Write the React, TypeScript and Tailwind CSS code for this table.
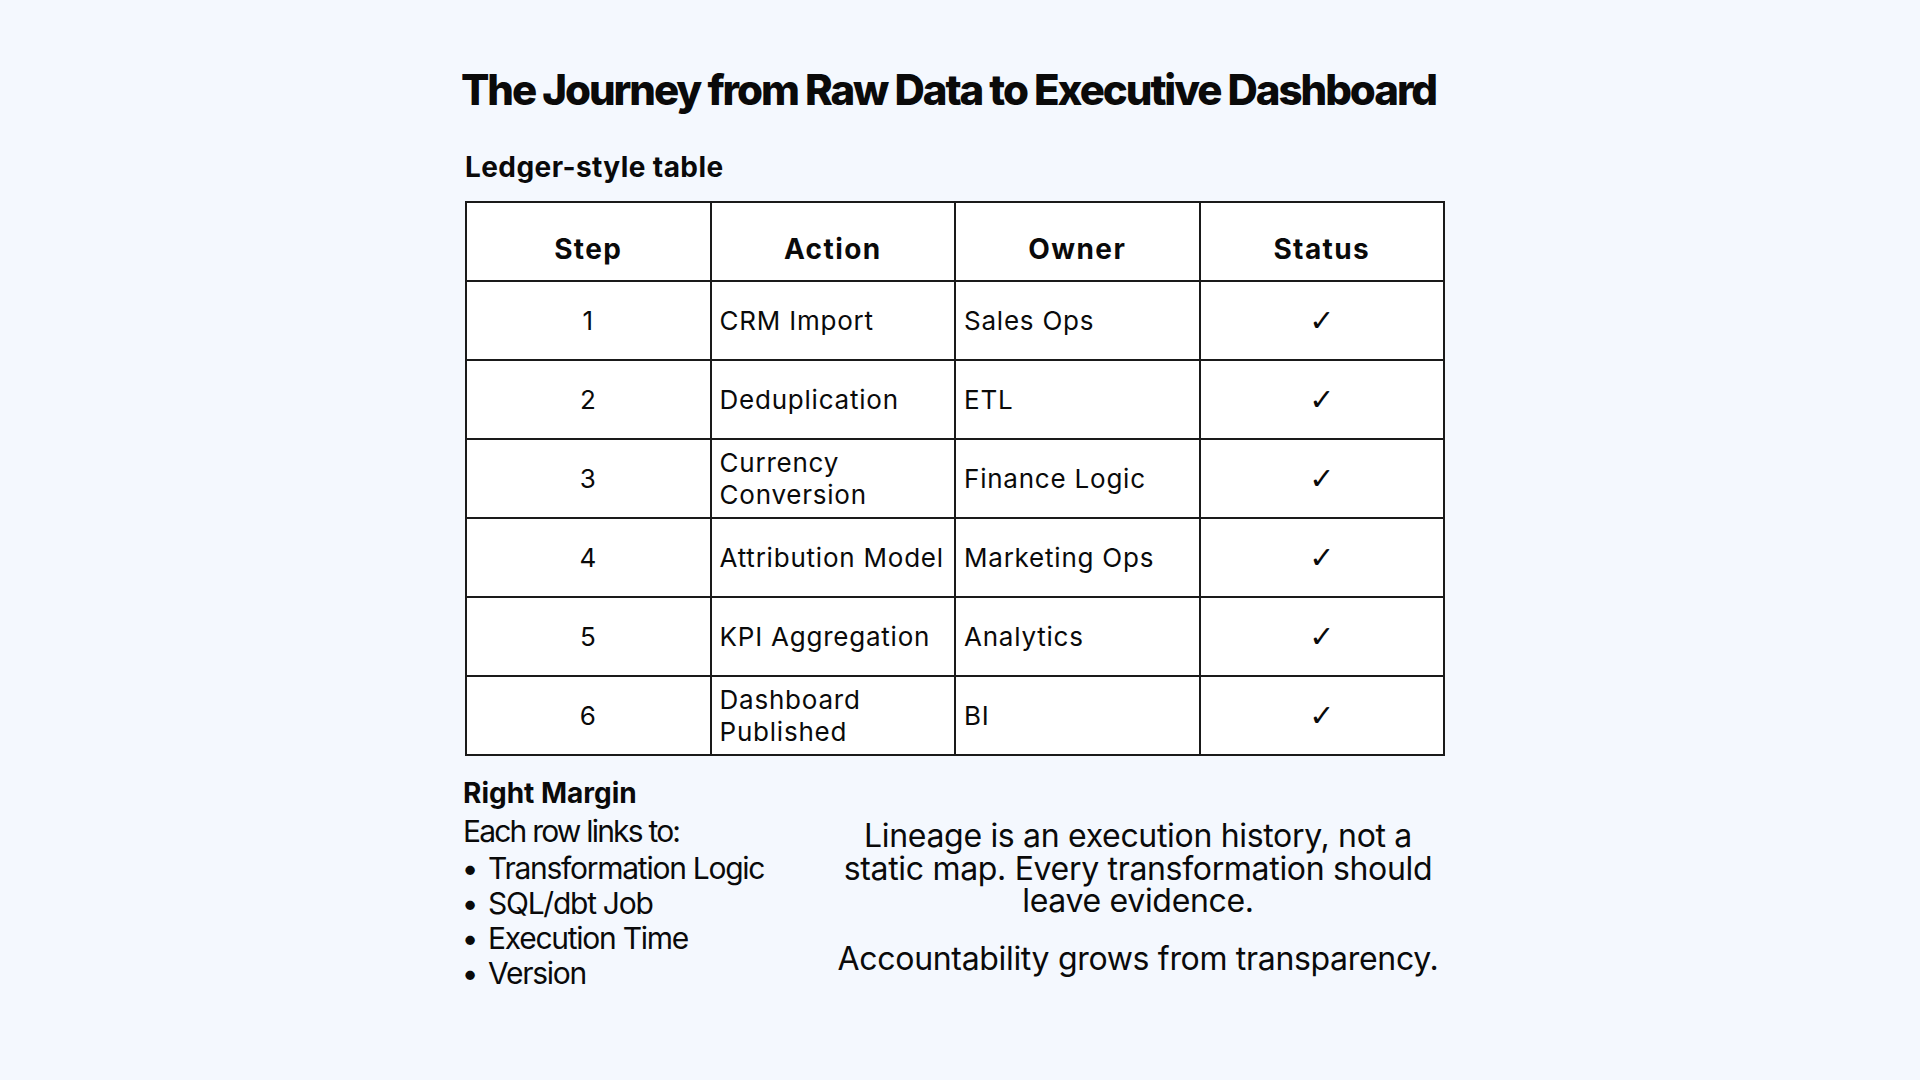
import React from "react";

const rows: [string, string[], string][] = [
  ["1", ["CRM Import"], "Sales Ops"],
  ["2", ["Deduplication"], "ETL"],
  ["3", ["Currency", "Conversion"], "Finance Logic"],
  ["4", ["Attribution Model"], "Marketing Ops"],
  ["5", ["KPI Aggregation"], "Analytics"],
  ["6", ["Dashboard", "Published"], "BI"],
];

const bullets = ["Transformation Logic", "SQL/dbt Job", "Execution Time", "Version"];

export default function App() {
  return (
    <div className="min-h-[1080px] w-full bg-[#f4f8fe] text-[#0a0a0a] font-[Inter,sans-serif] pt-[66px]">
      <div className="ml-[465px] w-[980px]">
        <h1 className="-mx-[20px] pr-[13px] text-center text-[42px] font-extrabold leading-[48px] tracking-[-0.049em] whitespace-nowrap">
          The Journey from Raw Data to Executive Dashboard
        </h1>
        <h2 className="mt-[37px] text-[28px] font-bold leading-[32px] tracking-[0.015em]">
          Ledger-style table
        </h2>
        <table className="mt-[18px] w-[980px] table-fixed border-collapse bg-white">
          <thead>
            <tr>
              {["Step", "Action", "Owner", "Status"].map((h) => (
                <th
                  key={h}
                  className="h-[79px] border-2 border-[#1a1a1a] pt-[14px] text-center align-middle text-[28px] font-bold leading-[32px] tracking-[0.05em]"
                >
                  {h}
                </th>
              ))}
            </tr>
          </thead>
          <tbody>
            {rows.map(([n, action, owner]) => (
              <tr key={n}>
                <td className="h-[79px] border-2 border-[#1a1a1a] text-center align-middle text-[26px] leading-[32px] tracking-[0.03em]">
                  {n}
                </td>
                <td className="h-[79px] border-2 border-[#1a1a1a] px-2 text-left align-middle text-[26px] leading-[32px] tracking-[0.03em] whitespace-nowrap">
                  {action.map((line) => (
                    <div key={line}>{line}</div>
                  ))}
                </td>
                <td className="h-[79px] border-2 border-[#1a1a1a] px-2 text-left align-middle text-[26px] leading-[32px] tracking-[0.03em] whitespace-nowrap">
                  {owner}
                </td>
                <td className="h-[79px] border-2 border-[#1a1a1a] text-center align-middle font-['DejaVu_Sans',sans-serif] text-[30px] leading-[32px]">
                  ✓
                </td>
              </tr>
            ))}
          </tbody>
        </table>

        <div className="mt-[21px] flex">
          <div className="-ml-[2px] w-[370px] shrink-0">
            <div className="text-[28px] font-bold leading-[32px]">Right Margin</div>
            <div className="mt-[5px] text-[30px] leading-[35px] tracking-[-0.06em]">Each row links to:</div>
            <ul className="mt-[2px]">
              {bullets.map((b) => (
                <li key={b} className="flex text-[30px] leading-[35px] tracking-[-0.042em]">
                  <span className="w-[25px] shrink-0 font-bold">•</span>
                  <span>{b}</span>
                </li>
              ))}
            </ul>
          </div>
          <div className="mt-[43px] w-[610px] text-center text-[32px] tracking-[-0.01em]">
            <p className="leading-[32.5px]">
              Lineage is an execution history, not a static map. Every transformation should leave evidence.
            </p>
            <p className="mt-[25px] leading-[32.5px] whitespace-nowrap">Accountability grows from transparency.</p>
          </div>
        </div>
      </div>
    </div>
  );
}
